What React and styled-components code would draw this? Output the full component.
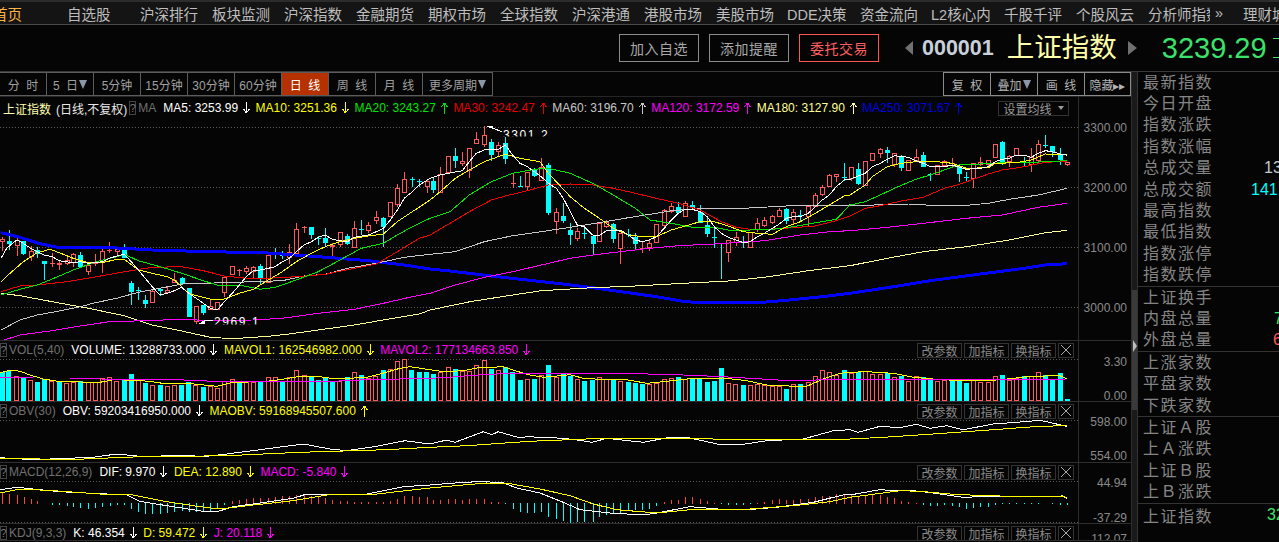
import styled, { createGlobalStyle } from 'styled-components';

const GlobalStyle = createGlobalStyle`
  html, body {
    margin: 0;
    height: 100%;
    background: #050505;
    overflow: hidden;
  }

  #root {
    width: 1279px;
    height: 542px;
    overflow: hidden;
  }
`;

const RED = '#ff5a5a';
const CYAN = '#00ffff';
const YELLOW = '#ffff00';
const PALE = '#ffff99';
const GREEN = '#00e600';
const MAGENTA = '#ff00ff';

const navItems = [
  ['首页', 74], ['自选股', 73], ['沪深排行', 72], ['板块监测', 72], ['沪深指数', 72], ['金融期货', 72],
  ['期权市场', 72], ['全球指数', 72], ['沪深港通', 72], ['港股市场', 72], ['美股市场', 71], ['DDE决策', 73],
  ['资金流向', 71], ['L2核心内', 73], ['千股千评', 72], ['个股风云', 72], ['分析师指数', 62], ['»', 33, 5], ['理财城', 60],
];

const periodTabs = [
  ['分 时', 47], ['5 日', 47, true], ['5分钟', 47], ['15分钟', 47], ['30分钟', 47], ['60分钟', 47],
  ['日 线', 47], ['周 线', 47], ['月 线', 47], ['更多周期', 70, true],
];

const toolTabs = [['复 权', 48], ['叠加', 47, true], ['画 线', 47], ['隐藏▸▸', 46]];

const maLegend = [
  ['MA5: 3253.99', '#ffffff', 'down'],
  ['MA10: 3251.36', YELLOW, 'down'],
  ['MA20: 3243.27', GREEN, 'up'],
  ['MA30: 3242.47', '#e60000', 'up'],
  ['MA60: 3196.70', '#c8c8c8', 'up'],
  ['MA120: 3172.59', MAGENTA, 'up'],
  ['MA180: 3127.90', PALE, 'up'],
  ['MA250: 3071.67', '#0000e6', 'up'],
];

const sideSections = [
  [['最新指数'], ['今日开盘'], ['指数涨跌'], ['指数涨幅'], ['总成交量', '13288万', '#c8c8c8', 50], ['总成交额', '141.2亿', CYAN, 37], ['最高指数'], ['最低指数'], ['指数涨停'], ['指数跌停']],
  [['上证换手'], ['内盘总量', '7012万', '#3be36a', 60], ['外盘总量', '6276万', RED, 59]],
  [['上涨家数'], ['平盘家数'], ['下跌家数']],
  [['上证Ａ股'], ['上Ａ涨跌'], ['上证Ｂ股'], ['上Ｂ涨跌']],
  [['上证指数', '3239.29', '#3be36a', 53]],
];

// zoomed crops were read at 3x, the helpers bring them back to page pixels
const toPage = (x0, y0) => (pts) => pts.map(([x, y]) => [x0 + x / 3, y0 + y / 3]);
const left = toPage(0, 130);
const mid = toPage(430, 120);
const right = toPage(850, 120);

const joinLine = (a, b, c) => [
  ...a.filter(([x]) => x < 430),
  ...b.filter(([x]) => x >= 430 && x < 850),
  ...c.filter(([x]) => x >= 850),
].map(([x, y]) => `${x.toFixed(1)},${y.toFixed(1)}`).join(' ');

const maLines = [
  { color: '#0000ff', width: 3, points: joinLine(
    left([[3, 308], [60, 322], [115, 340], [178, 353], [350, 354], [457, 360], [589, 364], [805, 369], [955, 380], [1105, 392], [1213, 405], [1290, 417]]),
    mid([[0, 447], [60, 453], [184, 468], [292, 480], [400, 492], [488, 503], [595, 518], [679, 530], [766, 545], [840, 549], [982, 548], [1069, 541], [1177, 530], [1290, 510]]),
    right([[0, 520], [112, 503], [241, 482], [391, 462], [523, 445], [586, 435], [652, 431]])) },
  { color: PALE, width: 1, points: joinLine(
    left([[3, 490], [60, 497], [157, 515], [265, 535], [373, 557], [457, 585], [545, 603], [631, 622], [697, 626], [805, 619], [868, 612], [955, 600], [1063, 585], [1150, 570], [1258, 552], [1290, 550]]),
    mid([[0, 570], [120, 545], [248, 525], [334, 512], [488, 503], [616, 498], [760, 490], [895, 483], [1003, 472], [1135, 452], [1290, 433]]),
    right([[0, 437], [112, 415], [220, 395], [349, 380], [478, 360], [586, 338], [652, 331]])) },
  { color: MAGENTA, width: 1, points: joinLine(
    left([[3, 633], [60, 615], [157, 602], [241, 588], [328, 575], [436, 572], [545, 568], [610, 571], [760, 570], [847, 565], [955, 550], [1063, 538], [1150, 520], [1237, 500], [1290, 490]]),
    mid([[0, 520], [76, 495], [163, 472], [248, 455], [334, 435], [421, 415], [488, 405], [571, 395], [658, 385], [745, 377], [853, 372], [1003, 362], [1111, 345], [1198, 335], [1290, 331]]),
    right([[0, 332], [112, 322], [262, 305], [349, 295], [457, 285], [565, 262], [652, 250]])) },
  { color: '#c8c8c8', width: 1, points: joinLine(
    left([[3, 600], [60, 570], [112, 555], [178, 543], [241, 530], [286, 518], [350, 505], [415, 487], [480, 475], [545, 462], [610, 460], [673, 458], [760, 455], [847, 452], [912, 438], [976, 433], [1042, 415], [1129, 400], [1213, 382], [1290, 376]]),
    mid([[0, 403], [76, 395], [163, 365], [248, 347], [334, 335], [421, 322], [508, 308], [595, 293], [679, 280], [724, 272], [810, 265], [940, 265], [1069, 258], [1200, 256], [1290, 255]]),
    right([[0, 255], [46, 257], [112, 252], [175, 252], [262, 257], [349, 256], [415, 250], [478, 238], [565, 225], [652, 205]])) },
  { color: '#f00000', width: 1, points: joinLine(
    left([[3, 485], [60, 468], [112, 465], [200, 455], [290, 440], [373, 425], [457, 412], [545, 410], [610, 422], [673, 438], [739, 445], [805, 445], [889, 440], [976, 433], [1063, 415], [1129, 402], [1192, 365], [1258, 325], [1290, 312]]),
    mid([[0, 345], [60, 310], [118, 275], [184, 240], [226, 228], [292, 212], [355, 195], [421, 192], [488, 195], [550, 205], [616, 220], [679, 235], [745, 250], [810, 270], [874, 305], [919, 322], [961, 328], [1027, 327], [1090, 323], [1156, 318], [1219, 302], [1290, 283]]),
    right([[0, 288], [46, 265], [91, 257], [154, 243], [220, 232], [283, 205], [328, 193], [370, 178], [415, 162], [457, 150], [523, 140], [586, 127], [652, 124]])) },
  { color: GREEN, width: 1, points: joinLine(
    left([[3, 495], [60, 478], [112, 465], [157, 447], [220, 420], [290, 395], [350, 380], [373, 373], [415, 392], [480, 410], [545, 430], [610, 452], [652, 465], [718, 465], [781, 478], [826, 472], [889, 450], [955, 425], [1020, 390], [1084, 355], [1150, 340], [1192, 315], [1237, 290], [1290, 265]]),
    mid([[0, 295], [60, 275], [118, 225], [184, 185], [248, 160], [313, 148], [355, 145], [421, 160], [488, 190], [550, 225], [616, 265], [660, 300], [724, 310], [787, 322], [853, 322], [895, 330], [961, 330], [1027, 328], [1090, 320], [1156, 308], [1219, 298], [1290, 268]]),
    right([[0, 255], [46, 245], [91, 225], [133, 205], [197, 178], [241, 165], [283, 150], [328, 135], [391, 132], [457, 128], [523, 128], [586, 125], [652, 122]])) },
  { color: YELLOW, width: 1, points: joinLine(
    left([[3, 457], [30, 430], [70, 395], [112, 368], [150, 358], [178, 368], [220, 385], [265, 398], [307, 398], [350, 388], [373, 388], [415, 420], [457, 430], [502, 440], [523, 450], [545, 470], [566, 490], [589, 497], [631, 507], [673, 507], [718, 490], [760, 478], [805, 450], [847, 425], [889, 395], [934, 370], [976, 350], [1020, 335], [1063, 325], [1105, 318], [1150, 312], [1192, 275], [1237, 245], [1290, 210]]),
    mid([[0, 240], [31, 215], [76, 175], [118, 150], [163, 125], [205, 110], [226, 103], [270, 115], [330, 125], [355, 160], [379, 185], [421, 230], [463, 265], [508, 295], [550, 325], [595, 345], [637, 350], [679, 350], [724, 330], [766, 318], [810, 305], [853, 305], [895, 318], [940, 335], [982, 340], [1027, 343], [1069, 320], [1111, 305], [1156, 280], [1198, 255], [1243, 228], [1290, 205]]),
    right([[0, 225], [46, 195], [67, 170], [112, 140], [154, 130], [197, 125], [262, 125], [307, 130], [349, 145], [415, 143], [436, 130], [499, 128], [544, 120], [586, 102], [631, 103], [652, 104]])) },
  { color: '#ffffff', width: 1, points: joinLine(
    left([[3, 385], [20, 355], [50, 330], [70, 340], [92, 355], [112, 365], [133, 375], [157, 380], [178, 392], [220, 398], [241, 395], [265, 400], [307, 395], [328, 385], [350, 378], [373, 373], [394, 395], [415, 420], [436, 445], [457, 470], [480, 495], [502, 490], [523, 482], [545, 472], [566, 490], [589, 505], [610, 520], [631, 535], [652, 540], [673, 515], [697, 490], [718, 465], [739, 440], [760, 422], [781, 420], [805, 415], [826, 410], [847, 395], [868, 385], [889, 365], [912, 345], [934, 335], [955, 322], [976, 315], [997, 328], [1020, 332], [1042, 335], [1063, 322], [1105, 315], [1129, 305], [1150, 295], [1171, 270], [1192, 240], [1213, 205], [1237, 185], [1258, 165], [1290, 158]]),
    mid([[0, 175], [31, 165], [55, 160], [97, 152], [118, 125], [139, 100], [163, 90], [205, 88], [226, 75], [248, 105], [270, 130], [292, 140], [313, 155], [334, 170], [355, 190], [379, 205], [400, 235], [421, 275], [442, 315], [463, 320], [488, 345], [508, 347], [529, 332], [550, 330], [571, 330], [595, 345], [616, 360], [637, 365], [658, 360], [679, 350], [703, 325], [724, 300], [745, 280], [766, 268], [787, 268], [810, 275], [832, 290], [853, 320], [874, 340], [895, 352], [919, 360], [940, 368], [961, 365], [982, 350], [1003, 340], [1027, 325], [1048, 312], [1069, 295], [1090, 290], [1111, 290], [1135, 280], [1156, 260], [1177, 240], [1198, 225], [1219, 200], [1243, 180], [1264, 175], [1290, 170]]),
    right([[0, 178], [46, 160], [67, 140], [91, 130], [112, 118], [133, 107], [175, 112], [197, 122], [220, 130], [241, 140], [283, 140], [307, 135], [349, 148], [391, 145], [415, 140], [436, 125], [457, 118], [478, 115], [499, 105], [523, 105], [544, 112], [565, 100], [586, 92], [607, 95], [631, 102], [652, 106]])) },
];

// x, body top, body bottom, wick high, wick low, in crop pixels
const candleRows = {
  left: `5r327,337,322,362 26c333,343,300,360 50r330,347,325,378 70c333,372,333,375 92r363,380,347,392 112c360,372,352,385
    133c393,401,393,450 157r400,400,370,412 178r400,405,393,420 200r390,402,375,405 220r373,398,370,410 241c376,410,365,412
    265r405,425,400,435 286r400,400,372,408 307r363,400,358,428 328r360,364,337,368 350r358,365,350,375 373c360,384,342,385
    394c459,487,453,525 415c480,480,472,510 436c510,522,495,533 457r482,518,480,518 480c478,484,476,497 502r481,489,470,492
    523r451,460,428,460 545c445,462,442,465 566c475,560,475,560 589r529,575,529,582 610c525,548,525,555 631r529,541,508,541
    652r517,540,517,540 673r440,490,440,502 697r408,435,408,435 718r421,424,417,438 739r415,425,408,432 760r412,425,408,445
    781c408,448,403,465 805r376,460,376,460 826c370,370,355,388 847c375,375,362,388 868r365,385,342,402 889r296,372,280,372
    912r290,295,288,310 934c292,315,292,328 955c323,323,318,345 976c324,338,295,350 997r346,352,340,382 1020r307,344,307,350
    1042c319,342,312,345 1063r295,353,272,355 1084c298,298,270,315 1105r286,303,277,310 1129r262,274,243,282 1150c265,292,262,350
    1171r217,260,217,260 1192r175,224,162,230 1213r148,190,125,190 1237c148,148,142,172 1258c152,152,148,172 1280r152,170,150,188`,
  mid: `10c183,210,175,218 31r163,218,142,218 55r108,160,108,160 76c108,122,85,145 97r122,132,95,137 118r85,153,85,175
    139r57,72,37,72 163r45,75,18,80 184c67,104,58,122 205r75,95,65,112 226c70,116,50,132 248r190,190,163,203 270c197,197,168,200
    292r155,200,155,212 313c150,167,145,170 334r140,182,115,182 355c135,280,128,285 379r277,307,265,342 400c288,303,248,308
    421c330,345,308,375 442r334,357,325,362 463c340,340,325,358 488c347,372,345,402 508r310,365,310,365 529r305,320,300,325
    550c312,357,310,368 571r338,387,338,432 595c342,342,328,350 616c352,372,340,388 637r384,384,365,400 658r368,384,360,392
    679r312,368,312,368 703r271,318,268,320 724r258,275,250,278 745c262,278,245,280 766r250,290,243,290 787c255,263,243,268
    810c275,310,255,310 832c315,342,295,350 853c350,350,320,385 874c370,370,368,478 895r361,400,361,425 919r352,370,335,378
    940c365,365,348,385 961r335,385,335,385 982r310,330,295,335 1003r300,318,292,320 1027r288,310,285,312 1048r270,290,265,292
    1069c267,302,265,312 1090r275,300,268,312 1111c285,285,270,302 1135r258,290,255,320 1156r226,260,220,262 1177r202,226,195,228
    1198r166,200,162,200 1219r163,170,163,185 1243c172,172,130,182 1264r142,178,142,182`,
  right: `25c148,192,128,195 46r124,198,124,198 67r100,122,100,122 91r87,103,85,115 112c90,100,82,130 133r100,135,100,140
    154c110,145,105,152 175r120,152,120,152 197r112,124,88,127 220c105,140,95,142 241c163,163,158,182 262r135,165,135,165
    283r122,138,120,142 307r128,128,115,140 328c140,163,135,185 349c172,172,157,182 370r130,178,130,205 391r127,135,112,137
    415r120,135,120,140 436r72,113,72,113 457c66,125,64,135 478r107,125,105,140 499r85,107,85,107 523c125,125,110,142
    544r112,135,85,155 565r72,122,60,125 586c75,75,45,85 607c78,97,78,112 631c103,120,85,135 652r127,135,127,137`,
};

const parseCandles = (rows, x0, y0) => rows.trim().split(/\s+/).map((cell) => {
  const [, x, kind, rest] = cell.match(/^(\d+)([cr])(.+)$/);
  const [top, bottom, high, low] = rest.split(',').map((n) => y0 + Number(n) / 3);
  return { x: Math.round(x0 + Number(x) / 3), kind, top, bottom, high, low };
});

const candles = [
  ...parseCandles(candleRows.left, 0, 130),
  ...parseCandles(candleRows.mid, 430, 120),
  ...parseCandles(candleRows.right, 850, 120),
];

// bar left edge, colour, top in crop pixels
const volumeRows = [
  [0, `0c100 18c95 42r110 63c115 85r122 105c128 126c120 148r125 170c128 192r132 213r128 234c125 257r128 278r128 299r117 320r113
    342r127 365c122 387c105 408r122 430c132 451r138 473c138 495r140 516r138 537c138 558c130 580r138 602c145 623r142 645r147
    665r125 690r120 710c132 732r125 753r128 775c127 798r115 818r115 840c125 862r115 883r93 905r108 927c110 948c123 968c113
    990c128 1012r127 1035c115 1055r100 1076c108 1098r118 1120r112 1143c93 1163r90 1185r67 1206r60 1228c93 1250c100 1272c100`],
  [430, `3c105 24r98 48r85 69c90 90r96 111r96 132r79 156r64 177c90 198r94 219c83 240c100 264c123 285r121 306c120 327r109 348c78
    372r114 393c105 414c111 435r121 456c126 480c123 501r115 522r121 543c123 564r126 588c129 609c132 630c135 651r136 672r131
    696r121 717r118 738c114 759r120 780c118 801c118 825c129 846c126 867c87 888r133 909r136 933c138 954r139 975r136 996r137
    1020r142 1041r142 1062c150 1083r136 1104c135 1128r130 1149r111 1170r94 1191r100 1212r109 1236c93 1257r102`],
  [850, `18c100 39r97 60r106 84r106 105c102 126r114 147c112 168r126 192r112 213c114 234c122 255r126 276r124 300c122 321c123 342c132
    363r122 384r130 408r130 429r112 450c108 471r123 492r118 516c112 537r112 558r99 579c108 600c122 624c102 645c180`],
];

const volumeBars = volumeRows.flatMap(([x0, rows]) => rows.trim().split(/\s+/).map((cell) => {
  const [, x, kind, top] = cell.match(/^(\d+)([cr])(\d+)$/);
  return { x: Math.round(x0 + Number(x) / 3), kind, top: Math.round(340 + Number(top) / 3) };
}));

const macdRows = [
  [0, '5:460 26:465 50:467 72:475 92:480 112:487 157:497 178:498 200:500 220:503 241:508 263:510 285:508 307:505 330:500 350:497 372:497 394:510 415:520 436:526 457:525 480:525 502:522 523:520 545:515 566:520 589:520 610:520 631:518 652:510 673:498 697:485 718:483 739:480 760:478 781:478 805:478 826:475 847:472 868:472 889:468 912:468 934:470 955:470 976:478 997:483 1020:485 1042:487 1063:488 1084:490 1105:490 1129:490 1150:490 1171:487 1192:480 1213:472 1237:470 1258:473 1280:475'],
  [430, '10:483 31:483 55:480 76:480 97:483 118:480 139:480 163:480 184:490 205:490 226:495 248:510 270:520 292:522 313:522 334:520 355:533 379:540 400:545 421:552 442:550 463:550 488:548 508:535 529:527 550:525 571:522 595:515 616:512 637:512 658:510 679:500 703:490 724:483 745:482 766:475 787:475 810:480 832:487 853:491 874:494 895:497 919:497 940:497 961:494 982:491 1003:488 1027:483 1048:480 1069:483 1090:482 1111:480 1135:480 1156:475 1177:470 1198:470 1219:465 1243:465 1264:467'],
  [850, '24:474 46:470 67:468 91:467 112:474 133:477 154:487 175:489 197:491 220:497 241:500 262:501 283:499 307:501 328:505 349:509 370:506 391:505 415:503 436:497 457:496 478:496 499:495 523:496 544:496 565:495 607:496 631:497 652:499'],
];

const macdBars = macdRows.flatMap(([x0, rows]) => rows.split(' ').map((cell) => {
  const [x, y] = cell.split(':').map(Number);
  return { x: Math.round(x0 + x / 3), y: 340 + y / 3, up: y < 493 };
}));

const low = (x0) => toPage(x0, 340);
const lowLine = (a, b, c) => joinLine(low(0)(a), low(430)(b), low(850)(c));

const volLines = [
  { color: YELLOW, points: lowLine(
    [[0, 102], [30, 93], [60, 97], [90, 108], [130, 120], [180, 128], [300, 130], [340, 122], [400, 124], [450, 127], [500, 135], [560, 133], [650, 142], [700, 130], [790, 128], [840, 122], [900, 112], [950, 112], [1010, 120], [1100, 115], [1140, 105], [1200, 88], [1230, 83], [1290, 90]],
    [[0, 92], [40, 98], [100, 95], [140, 87], [220, 83], [255, 95], [300, 108], [340, 115], [420, 107], [460, 118], [530, 122], [590, 122], [650, 133], [700, 128], [790, 118], [880, 117], [950, 125], [1000, 136], [1020, 140], [1130, 142], [1180, 120], [1230, 103], [1290, 100]],
    [[0, 100], [50, 98], [130, 103], [190, 115], [250, 120], [330, 125], [410, 125], [450, 122], [490, 118], [540, 112], [630, 110], [650, 120]]) },
  { color: MAGENTA, points: lowLine(
    [[0, 115], [100, 117], [210, 117], [300, 120], [530, 122], [640, 127], [800, 127], [1000, 127], [1100, 122], [1200, 120], [1290, 118]],
    [[0, 118], [60, 115], [130, 109], [220, 104], [620, 104], [760, 108], [880, 113], [1060, 124], [1290, 125]],
    [[0, 122], [400, 122], [650, 120]]) },
];

const obvLines = [
  { color: '#ffffff', points: lowLine(
    [[0, 356], [100, 362], [200, 358], [280, 355], [350, 345], [420, 352], [550, 350], [620, 352], [680, 345], [780, 332], [910, 315], [990, 330], [1040, 335], [1130, 322], [1215, 305], [1290, 312]],
    [[0, 315], [50, 303], [75, 310], [160, 278], [185, 287], [205, 278], [270, 297], [290, 293], [400, 298], [440, 303], [487, 310], [530, 298], [640, 310], [720, 295], [780, 297], [875, 318], [940, 316], [1010, 305], [1120, 300], [1210, 275], [1290, 278]],
    [[0, 272], [25, 280], [90, 262], [150, 266], [200, 256], [240, 268], [290, 260], [340, 272], [430, 255], [500, 250], [570, 244], [650, 262]]) },
  { color: YELLOW, points: lowLine(
    [[0, 357], [200, 362], [400, 354], [680, 350], [900, 340], [1160, 332], [1290, 325]],
    [[0, 325], [110, 320], [300, 307], [520, 298], [850, 300], [1000, 303], [1210, 302], [1290, 298]],
    [[0, 300], [100, 295], [280, 283], [430, 272], [570, 262], [650, 260]]) },
];

const macdLines = [
  { color: '#ffffff', points: lowLine(
    [[0, 452], [50, 445], [100, 450], [180, 458], [380, 468], [420, 487], [500, 500], [610, 517], [655, 517], [700, 503], [780, 492], [880, 478], [920, 465], [1010, 465], [1100, 465], [1210, 443], [1290, 440]],
    [[0, 438], [60, 433], [140, 428], [215, 430], [260, 447], [330, 462], [400, 490], [450, 512], [540, 522], [640, 528], [680, 522], [780, 503], [865, 510], [940, 513], [1040, 505], [1150, 490], [1250, 465], [1290, 463]],
    [[0, 468], [45, 460], [90, 452], [140, 455], [190, 455], [250, 462], [340, 475], [430, 472], [520, 474], [640, 473], [650, 478]]) },
  { color: YELLOW, points: lowLine(
    [[0, 462], [60, 450], [160, 455], [300, 465], [400, 468], [500, 488], [600, 503], [660, 510], [760, 498], [880, 485], [1000, 465], [1130, 465], [1290, 448]],
    [[0, 447], [100, 438], [170, 432], [240, 434], [330, 450], [420, 470], [490, 495], [560, 512], [680, 522], [780, 512], [950, 511], [1090, 500], [1200, 488], [1290, 475]],
    [[0, 475], [60, 467], [150, 455], [210, 457], [300, 465], [400, 470], [500, 472], [640, 471], [650, 476]]) },
];

const indicators = [
  {
    tag: 'VOL(5,40)',
    items: [['VOLUME: 13288733.000', '#ffffff', 'down'], ['MAVOL1: 162546982.000', YELLOW, 'down'], ['MAVOL2: 177134663.850', MAGENTA, 'down']],
    ticks: [['3.30', 367], ['0.00', 401]],
  },
  {
    tag: 'OBV(30)',
    items: [['OBV: 59203416950.000', '#ffffff', 'down'], ['MAOBV: 59168945507.600', YELLOW, 'up']],
    ticks: [['598.00', 427], ['554.00', 461]],
  },
  {
    tag: 'MACD(12,26,9)',
    items: [['DIF: 9.970', '#ffffff', 'down'], ['DEA: 12.890', YELLOW, 'down'], ['MACD: -5.840', MAGENTA, 'down']],
    ticks: [['44.94', 488], ['-37.29', 523]],
  },
  {
    tag: 'KDJ(9,3,3)',
    items: [['K: 46.354', '#ffffff', 'down'], ['D: 59.472', YELLOW, 'down'], ['J: 20.118', MAGENTA, 'down']],
    ticks: [['112.07', 544]],
  },
];

function TrendArrow({ color, dir, gap }) {
  return (
    <ArrowIcon $gap={gap} viewBox="0 0 7 12" width="7" height="12" fill="none" stroke={color} strokeWidth="1" shapeRendering="crispEdges">
      {dir === 'up'
        ? <path d="M3.5 1v11M3.5 1L.5 5M3.5 1l3 4" />
        : <path d="M3.5 0v11M3.5 11L.5 7M3.5 11l3-4" />}
    </ArrowIcon>
  );
}

function LegendItems({ items, gap }) {
  return items.map(([text, color, dir]) => (
    <LegendItem key={text} $color={color}>
      {text}
      <TrendArrow color={color} dir={dir} gap={gap} />
    </LegendItem>
  ));
}

function Grid({ rows }) {
  return rows.map((y) => (
    <line key={y} x1="0" x2="1078" y1={y + 0.5} y2={y + 0.5} stroke="#5a5a5a" strokeDasharray="1 2" />
  ));
}

function Lines({ lines }) {
  return lines.map((line) => (
    <polyline key={line.color} points={line.points} fill="none" stroke={line.color} strokeWidth={line.width || 1} />
  ));
}

function Candle({ x, kind, top, bottom, high, low: bottomWick }) {
  const color = kind === 'c' ? CYAN : RED;
  const y1 = Math.round(top);
  const y2 = Math.round(bottom);
  const wickX = x + 0.5;
  return (
    <g>
      <line x1={wickX} x2={wickX} y1={Math.round(high)} y2={y1} stroke={color} />
      <line x1={wickX} x2={wickX} y1={y2} y2={Math.round(bottomWick)} stroke={color} />
      {y2 - y1 < 2 && <rect x={x - 2} y={y1} width="5" height="1" fill={color} />}
      {y2 - y1 >= 2 && kind === 'c' && <rect x={x - 2} y={y1} width="5" height={y2 - y1} fill={color} />}
      {y2 - y1 >= 2 && kind === 'r' && <rect x={x - 1.5} y={y1 + 0.5} width="4" height={y2 - y1 - 1} fill="#050505" stroke={color} />}
    </g>
  );
}

function VolumePlot() {
  return (
    <PlotSvg viewBox="0 360 1078 42" width="1078" height="42" shapeRendering="crispEdges">
      <Grid rows={[360]} />
      {volumeBars.map((bar) => (bar.kind === 'c'
        ? <rect key={bar.x} x={bar.x} y={bar.top} width="5" height={402 - bar.top} fill={CYAN} />
        : <rect key={bar.x} x={bar.x + 0.5} y={bar.top + 0.5} width="4" height={401 - bar.top} fill="#050505" stroke={RED} />))}
      <Lines lines={volLines} />
    </PlotSvg>
  );
}

function ObvPlot() {
  return (
    <PlotSvg viewBox="0 421 1078 42" width="1078" height="42" shapeRendering="crispEdges">
      <Grid rows={[421]} />
      <Lines lines={obvLines} />
    </PlotSvg>
  );
}

function MacdPlot() {
  return (
    <PlotSvg viewBox="0 482 1078 42" width="1078" height="42" shapeRendering="crispEdges">
      <Grid rows={[482, 523]} />
      {macdBars.map((bar) => (
        <line
          key={bar.x}
          x1={bar.x + 0.5}
          x2={bar.x + 0.5}
          y1={bar.up ? bar.y : 504}
          y2={bar.up ? 505 : bar.y}
          stroke={bar.up ? '#ff4040' : CYAN}
        />
      ))}
      <Lines lines={macdLines} />
    </PlotSvg>
  );
}

const plots = { 'VOL(5,40)': VolumePlot, 'OBV(30)': ObvPlot, 'MACD(12,26,9)': MacdPlot };

function AxisLabels({ ticks, from, height }) {
  return (
    <AxisSvg viewBox={`1079 ${from} 52 ${height}`} width="52" height={height}>
      {ticks.map(([label, y]) => (
        <text key={label} x="1127" y={y} textAnchor="end" fontSize="12" fill="#8a8a8a">{label}</text>
      ))}
    </AxisSvg>
  );
}

function IndicatorPanel({ indicator, top, height }) {
  const Plot = plots[indicator.tag];
  return (
    <ChartRow $height={height}>
      <PlotColumn>
        <IndicatorHeader>
          <HelpBox>?</HelpBox>
          <IndicatorTag>{indicator.tag}</IndicatorTag>
          <LegendItems items={indicator.items} gap={6.5} />
          <HeaderButtons>
            <MiniButton>改参数</MiniButton>
            <MiniButton>加指标</MiniButton>
            <MiniButton>换指标</MiniButton>
            <CloseButton>
              <svg viewBox="0 0 10 10" width="10" height="10" stroke="#aaa" strokeWidth="1" fill="none">
                <path d="M0 0l10 10M10 0L0 10" />
              </svg>
            </CloseButton>
          </HeaderButtons>
        </IndicatorHeader>
        {Plot && <Plot />}
      </PlotColumn>
      <AxisLabels ticks={indicator.ticks} from={top} height={height} />
    </ChartRow>
  );
}

export default function App() {
  return (
    <Page>
      <GlobalStyle />
      <NavBar>
        {navItems.map(([label, width, indent], i) => (
          <NavItem key={label} $width={width} $indent={indent} $active={i === 0}>{label}</NavItem>
        ))}
      </NavBar>

      <QuoteBar>
        <ActionButton>加入自选</ActionButton>
        <ActionButton>添加提醒</ActionButton>
        <ActionButton $danger>委托交易</ActionButton>
        <PrevArrow />
        <StockCode>000001</StockCode>
        <StockName>上证指数</StockName>
        <NextArrow />
        <Price>3239.29</Price>
        <PriceTick />
      </QuoteBar>

      <Workspace>
        <ChartColumn>
          <Toolbar>
            <TabGroup>
              {periodTabs.map(([label, width, caret]) => (
                <Tab key={label} $width={width} $active={label === '日 线'}>
                  {label}
                  {caret && <TabCaret />}
                </Tab>
              ))}
            </TabGroup>
            <TabGroup>
              {toolTabs.map(([label, width, caret]) => (
                <Tab key={label} $width={width} $bright>
                  {label}
                  {caret && <TabCaret />}
                </Tab>
              ))}
            </TabGroup>
          </Toolbar>

          <ChartRow $height={244}>
            <PlotColumn>
              <MainLegend>
                <IndexTitle>上证指数</IndexTitle>
                <LegendNote>(日线,不复权)</LegendNote>
                <HelpBox>?</HelpBox>
                <IndicatorTag>MA</IndicatorTag>
                <LegendItems items={maLegend} gap={5.5} />
                <AverageButton>设置均线<Caret /></AverageButton>
              </MainLegend>
              <PlotSvg viewBox="0 119 1078 222" width="1078" height="222">
                <defs>
                  <clipPath id="high-label"><rect x="500" y="119" width="60" height="17.5" /></clipPath>
                  <clipPath id="low-label"><rect x="210" y="300" width="60" height="24.5" /></clipPath>
                </defs>
                <g shapeRendering="crispEdges">
                  <Grid rows={[127, 187, 247, 307]} />
                  {candles.map((candle) => <Candle key={`${candle.x}-${candle.top}`} {...candle} />)}
                  <Lines lines={maLines} />
                  <polygon points="486,126 493,126 493,129" fill="#fff" />
                  <line x1="493" y1="128" x2="502" y2="132" stroke="#fff" />
                  <polygon points="198,324 205,320 205,324" fill="#fff" />
                  <line x1="205" y1="320.5" x2="213" y2="320.5" stroke="#fff" />
                </g>
                <MarkerText x="503" y="138.5" clipPath="url(#high-label)">3301.2</MarkerText>
                <MarkerText x="214" y="326" clipPath="url(#low-label)">2969.1</MarkerText>
              </PlotSvg>
            </PlotColumn>
            <AxisLabels
              ticks={[['3300.00', 132], ['3200.00', 192], ['3100.00', 252], ['3000.00', 312]]}
              from={97}
              height={244}
            />
          </ChartRow>

          <IndicatorPanel indicator={indicators[0]} top={342} height={61} />
          <IndicatorPanel indicator={indicators[1]} top={403} height={61} />
          <IndicatorPanel indicator={indicators[2]} top={464} height={61} />
          <IndicatorPanel indicator={indicators[3]} top={525} height={17} />
        </ChartColumn>

        <ScrollTrack>
          <ScrollThumb>
            <ScrollGrip />
          </ScrollThumb>
        </ScrollTrack>

        <SidePanel>
          {sideSections.map((rows) => (
            <SideSection key={rows[0][0]} $tall={rows.length === 1}>
              {rows.map(([label, value, color, offset]) => (
                <SideRow key={label}>
                  <SideLabel>{label}</SideLabel>
                  {value && <SideValue $color={color} $offset={offset}>{value}</SideValue>}
                </SideRow>
              ))}
            </SideSection>
          ))}
        </SidePanel>
      </Workspace>
    </Page>
  );
}

const Page = styled.div`
  width: 1279px;
  height: 542px;
  display: flex;
  flex-direction: column;
  overflow: hidden;
  background: #050505;
  font-family: "Liberation Sans", "Noto Sans CJK SC", sans-serif;
  font-size: 12px;
`;

const NavBar = styled.nav`
  flex: none;
  height: 22px;
  display: flex;
  align-items: center;
  margin-left: -7px;
  border-top: 2px solid #2c2c2c;
  border-bottom: 1px solid #4a4a4a;
  background: #141414;
  white-space: nowrap;
  overflow: hidden;
`;

const NavItem = styled.span`
  flex: none;
  box-sizing: border-box;
  width: ${(p) => p.$width}px;
  padding-left: ${(p) => p.$indent || 0}px;
  overflow: hidden;
  font-size: 14.5px;
  color: ${(p) => (p.$active ? '#ffb340' : '#bdbdbd')};
`;

const QuoteBar = styled.div`
  flex: none;
  height: 46px;
  display: flex;
  align-items: center;
  padding-left: 619px;
  border-bottom: 1px solid #3a3a3a;
  white-space: nowrap;
`;

const ActionButton = styled.button`
  flex: none;
  width: 80px;
  height: 28px;
  margin-right: 10px;
  padding: 0;
  border: 1px solid ${(p) => (p.$danger ? '#ff5555' : '#8c8c8c')};
  background: transparent;
  color: ${(p) => (p.$danger ? '#ff5f5f' : '#a8a8a8')};
  font-family: inherit;
  font-size: 14px;
  letter-spacing: 0.5px;
`;

const PrevArrow = styled.span`
  flex: none;
  width: 0;
  height: 0;
  margin-left: 16px;
  border-top: 7px solid transparent;
  border-bottom: 7px solid transparent;
  border-right: 8px solid #707070;
`;

const NextArrow = styled.span`
  flex: none;
  width: 0;
  height: 0;
  margin-left: 11px;
  border-top: 7px solid transparent;
  border-bottom: 7px solid transparent;
  border-left: 9px solid #707070;
`;

const StockCode = styled.span`
  margin-left: 9px;
  font-size: 21.5px;
  font-weight: 700;
  color: #c8d0dc;
`;

const StockName = styled.span`
  margin-left: 13px;
  font-size: 27.5px;
  line-height: 34px;
  color: #ffffa8;
`;

const Price = styled.span`
  margin-left: 25px;
  font-size: 29px;
  color: #3be36a;
`;

const PriceTick = styled.span`
  flex: none;
  width: 8px;
  height: 18px;
  margin-left: 6px;
  border-top: 1px solid #3be36a;
  border-bottom: 1px solid #3be36a;
`;

const Workspace = styled.div`
  flex: 1;
  min-height: 0;
  display: flex;
`;

const ChartColumn = styled.div`
  flex: none;
  width: 1132px;
  border-right: 1px solid #2e2e2e;
  box-sizing: border-box;
`;

const Toolbar = styled.div`
  height: 25px;
  display: flex;
  justify-content: space-between;
  border-bottom: 1px solid #262626;
  box-sizing: border-box;
`;

const TabGroup = styled.div`
  display: flex;
  height: 24px;
`;

const Tab = styled.div`
  flex: none;
  width: ${(p) => p.$width}px;
  box-sizing: border-box;
  display: flex;
  align-items: center;
  justify-content: center;
  border: 1px solid ${(p) => (p.$bright ? '#8a8a8a' : '#5c5c5c')};
  border-left-width: 0;
  background: ${(p) => (p.$active ? '#b53200' : 'transparent')};
  color: ${(p) => (p.$active ? '#ffffff' : p.$bright ? '#b4b4b4' : '#a0a0a0')};
  font-size: 12px;
  white-space: pre;
  word-spacing: 3px;

  &:first-child {
    border-left-width: ${(p) => (p.$bright ? 1 : 0)}px;
  }
`;

const TabCaret = styled.span`
  flex: none;
  width: 0;
  height: 0;
  margin-left: 1px;
  border-left: 4.5px solid transparent;
  border-right: 4.5px solid transparent;
  border-top: 9px solid #8c98a8;
`;

const ChartRow = styled.section`
  height: ${(p) => p.$height}px;
  display: flex;
  box-sizing: border-box;
  border-bottom: 1px solid #2e2e2e;
  overflow: hidden;
`;

const PlotColumn = styled.div`
  flex: none;
  width: 1078px;
  border-right: 1px solid #2e2e2e;
  box-sizing: content-box;
`;

const PlotSvg = styled.svg`
  display: block;
`;

const AxisSvg = styled.svg`
  display: block;
  flex: none;
  font-family: "Liberation Sans", sans-serif;
`;

const MarkerText = styled.text`
  font-size: 12px;
  letter-spacing: 1.6px;
  fill: #ffffff;
`;

const MainLegend = styled.div`
  height: 22px;
  display: flex;
  align-items: center;
  padding-left: 3px;
  white-space: nowrap;
`;

const IndexTitle = styled.span`
  color: #ffffb0;
  margin-right: 5px;
`;

const LegendNote = styled.span`
  color: #e8e8e8;
  margin-right: 2px;
`;

const HelpBox = styled.span`
  flex: none;
  width: 7px;
  height: 14px;
  box-sizing: border-box;
  display: flex;
  align-items: center;
  justify-content: center;
  border: 1px solid #444;
  color: #777;
  font-size: 11px;
`;

const IndicatorTag = styled.span`
  margin: 0 7px 0 2px;
  color: #707070;
`;

const LegendItem = styled.span`
  display: inline-flex;
  align-items: center;
  color: ${(p) => p.$color};
`;

const ArrowIcon = styled.svg`
  flex: none;
  margin: 0 ${(p) => p.$gap}px 0 5px;
`;

const AverageButton = styled.div`
  flex: none;
  box-sizing: border-box;
  width: 71px;
  height: 15px;
  margin-left: auto;
  margin-right: 9px;
  display: flex;
  align-items: center;
  justify-content: center;
  gap: 6px;
  border: 1px solid #333;
  color: #9a9a9a;
`;

const Caret = styled.span`
  width: 0;
  height: 0;
  border-left: 3px solid transparent;
  border-right: 3px solid transparent;
  border-top: 4px solid #9a9a9a;
`;

const IndicatorHeader = styled.div`
  height: 18px;
  display: flex;
  align-items: center;
  white-space: nowrap;
`;

const HeaderButtons = styled.div`
  margin-left: auto;
  margin-right: 4px;
  display: flex;
  gap: 2px;
`;

const MiniButton = styled.div`
  width: 45px;
  height: 15px;
  box-sizing: border-box;
  display: flex;
  align-items: center;
  justify-content: center;
  border: 1px solid #333;
  color: #8a8a8a;
`;

const CloseButton = styled(MiniButton)`
  width: 16px;
`;

const ScrollTrack = styled.div`
  flex: none;
  width: 5px;
  background: #1a1a1a;
  padding-top: 218px;
`;

const ScrollThumb = styled.div`
  position: relative;
  height: 120px;
  background: #3a3a3a;
`;

const ScrollGrip = styled.span`
  position: absolute;
  left: 1px;
  top: 50px;
  width: 0;
  height: 0;
  border-top: 6px solid transparent;
  border-bottom: 6px solid transparent;
  border-left: 4px solid #bdbdbd;
`;

const SidePanel = styled.aside`
  flex: 1;
  min-width: 0;
  overflow: hidden;
  border-left: 1px solid #333;
`;

const SideSection = styled.div`
  box-sizing: border-box;
  padding: ${(p) => (p.$tall ? '2px 0 0' : '0')};
  border-bottom: 1px solid #333;

  &:last-child {
    border-bottom: none;
  }
`;

const SideRow = styled.div`
  height: 21.4px;
  display: flex;
  align-items: center;
  padding-left: 5px;
  white-space: nowrap;
`;

const SideLabel = styled.span`
  flex: none;
  width: 71px;
  margin-bottom: 4px;
  font-size: 16px;
  letter-spacing: 1.5px;
  color: #858585;
`;

const SideValue = styled.span`
  padding-left: ${(p) => p.$offset}px;
  margin-bottom: 4px;
  font-size: 16px;
  color: ${(p) => p.$color};
`;
